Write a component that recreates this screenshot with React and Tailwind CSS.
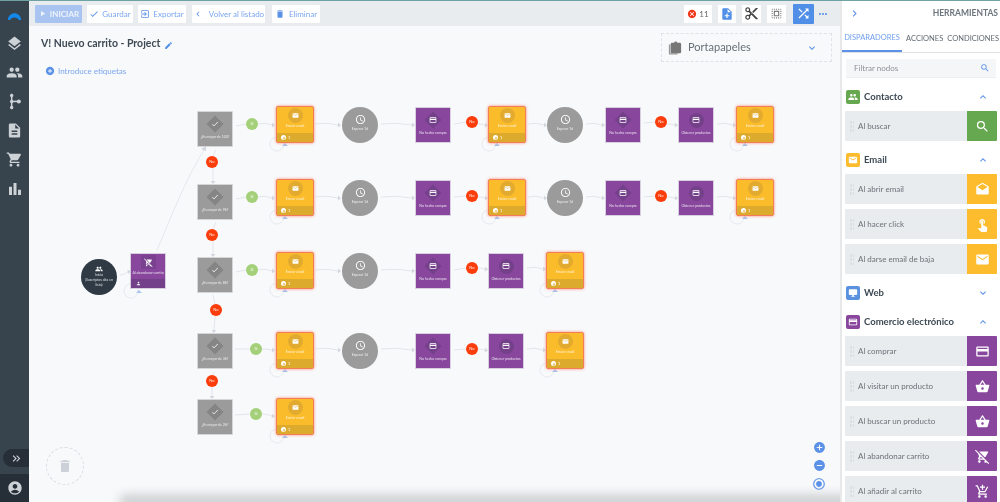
import {
  MdAccessTime, MdAccountCircle, MdAddCircle, MdAddShoppingCart, MdBarChart, MdCancel, MdCheck, MdChevronLeft,
  MdChevronRight, MdContentCut, MdCreditCard, MdDelete, MdDescription, MdDesktopWindows, MdDrafts, MdEdit,
  MdExitToApp, MdExpandLess, MdExpandMore, MdSelectAll, MdLayers, MdMail, MdMoreHoriz, MdNoteAdd, MdPeople,
  MdPlayArrow, MdRadioButtonChecked, MdRemoveCircle, MdRemoveShoppingCart, MdSearch, MdShoppingBasket,
  MdShoppingCart, MdShuffle, MdTouchApp, MdOutlineKeyboardDoubleArrowRight, MdPerson,
} from "react-icons/md";

const font = { fontFamily: 'Lato, "Open Sans", sans-serif' };

// page coordinates, the canvas starts at 29,26
const at = (x, y) => ({ left: x - 29, top: y - 26 });

const conditions = [
  [197, 111, "¿Es mayor de 100?"],
  [197, 184, "¿Es mayor de 96?"],
  [197, 257, "¿Es mayor de 86?"],
  [197, 333, "¿Es mayor de 36?"],
  [197, 399, "¿Es mayor de 26?"],
];
const emails = [
  [276, 106], [276, 179], [276, 252], [276, 332], [276, 398],
  [488, 106], [488, 179], [546, 252], [546, 332], [736, 106], [736, 179],
];
const clocks = [[342, 107], [342, 180], [342, 253], [342, 333], [547, 107], [547, 180]];
const purples = [
  [415, 107, "No hecho compra", true], [415, 180, "No hecho compra", true], [415, 253, "No hecho compra", true], [415, 333, "No hecho compra", true],
  [605, 107, "No hecho compra", true], [605, 180, "No hecho compra", true],
  [678, 107, "Obtener productos"], [678, 180, "Obtener productos"], [488, 253, "Obtener productos"], [488, 333, "Obtener productos"],
];
const yes = [[252, 124], [252, 197], [252, 270], [256, 349], [256, 414]];
const no = [
  [212, 162], [212, 235], [216, 310], [212, 381],
  [472, 122], [472, 196], [472, 268], [472, 349], [661, 122], [661, 196],
];

// [x1, y1, x2, y2]: straight connector ending in an arrow head
const rowLinks = (y, xs) => xs.map(([a, b]) => [a, y, b, y + 1]);
const links = [
  ...[124, 197, 270].flatMap((y) => rowLinks(y, [[258, 272], [315, 338], [381, 412]])),
  ...rowLinks(349, [[262, 272], [315, 338], [381, 412]]),
  [262, 414, 272, 416],
  ...[124, 197].flatMap((y) => rowLinks(y, [[478, 485], [528, 544], [586, 602], [667, 675], [717, 733]])),
  ...rowLinks(268, [[478, 485], [527, 543]]),
  ...rowLinks(349, [[478, 485], [527, 543]]),
  [213, 168, 213, 181], [213, 241, 213, 254], [216, 316, 214, 330], [212, 387, 212, 396],
  [120, 275, 128, 272],
];
const stubs = [
  [236, 126, 246, 124], [236, 199, 246, 197], [236, 272, 246, 270], [235, 349, 250, 349], [235, 415, 250, 414],
  [216, 150, 213, 156], [216, 222, 213, 229], [213, 295, 215, 304], [215, 372, 212, 375],
  [454, 124, 466, 122], [454, 197, 466, 196], [454, 270, 466, 268], [454, 350, 466, 349],
  [644, 123, 655, 122], [644, 197, 655, 196],
];

const sections = [
  { name: "Contacto", color: "bg-[#66a84f]", head: MdPeople, open: true, items: [["Al buscar", MdSearch]] },
  {
    name: "Email", color: "bg-[#fcbc2e]", head: MdMail, open: true,
    items: [["Al abrir email", MdDrafts], ["Al hacer click", MdTouchApp], ["Al darse email de baja", MdMail]],
  },
  { name: "Web", color: "bg-[#5b92e0]", head: MdDesktopWindows, items: [] },
  {
    name: "Comercio electrónico", color: "bg-[#88479d]", head: MdCreditCard, open: true,
    items: [
      ["Al comprar", MdCreditCard], ["Al visitar un producto", MdShoppingBasket], ["Al buscar un producto", MdShoppingBasket],
      ["Al abandonar carrito", MdRemoveShoppingCart], ["Al añadir al carrito", MdAddShoppingCart],
    ],
  },
];

function TreeIcon({ className }) {
  return (
    <svg viewBox="0 0 16 20" className={className} fill="currentColor">
      <rect x="3.2" y="1" width="1.8" height="18" />
      <rect x="4" y="9" width="8" height="1.8" />
      <circle cx="4.1" cy="3" r="2" />
      <circle cx="4.1" cy="10" r="2" />
      <circle cx="4.1" cy="17" r="2" />
      <circle cx="12.5" cy="10" r="2.4" />
    </svg>
  );
}

function ClipboardsIcon({ className }) {
  return (
    <svg viewBox="0 0 16 16" className={className} fill="currentColor">
      <path d="M1 4h1.5v10H11v1.5H2.2C1.5 15.5 1 15 1 14.3z" opacity="0.75" />
      <path d="M4.5 2H7c.2-.9 1-1.5 1.8-1.5S10.4 1.100 10.600 2h2.900C14.300 2 15 2.700 15 3.500v9c0 .8-.7 1.500-1.500 1.500h-9C3.700 14 3 13.300 3 12.500v-9C3 2.700 3.700 2 4.500 2z" />
    </svg>
  );
}

function Sidebar() {
  return (
    <div className="relative flex w-[29px] shrink-0 flex-col items-center bg-[#37434d] text-[#cdd2d7]">
      <svg viewBox="0 0 18 10" className="mt-[11px] h-[9px] w-[17px]">
        <path d="M1.5 9 C2.5 -1 15.500 -1 16.500 9 L14 9 C12 5 6 5 4 9 Z" fill="#1487e8" />
      </svg>
      <div className="mt-[14px] flex flex-col items-center gap-[12px]">
        <MdLayers className="h-[17px] w-[17px]" />
        <MdPeople className="h-[17px] w-[17px]" />
        <TreeIcon className="h-[17px] w-[14px]" />
        <MdDescription className="h-[17px] w-[17px]" />
        <MdShoppingCart className="h-[17px] w-[17px]" />
        <MdBarChart className="h-[18px] w-[18px]" />
      </div>
      <div className="mt-auto flex h-[18px] w-[26px] items-center justify-center self-end rounded-l-full bg-[#262f38]">
        <MdOutlineKeyboardDoubleArrowRight className="h-[13px] w-[13px]" />
      </div>
      <div className="mt-[7px] flex h-[28px] w-full items-center justify-center bg-[#262e37]">
        <MdAccountCircle className="h-[16px] w-[16px]" />
      </div>
    </div>
  );
}

function ToolButton({ icon: Icon, label, className = "" }) {
  return (
    <button className={`flex h-[18px] items-center justify-center whitespace-nowrap rounded-[1px] bg-white text-[8px] text-[#7ba6ee] ${className}`}>
      <Icon className="h-[10px] w-[10px] text-[#5b92e8]" />
      {label}
    </button>
  );
}

function Toolbar() {
  return (
    <div className="flex h-[25px] shrink-0 items-center bg-[#e9ecef] pl-[6px]">
      <button className="flex h-[18px] w-[47px] items-center justify-center gap-[3px] rounded-[1px] bg-[#a9c4f0] text-[8px] font-bold text-[#eef3fc]">
        <MdPlayArrow className="h-[9px] w-[9px]" />
        INICIAR
      </button>
      <ToolButton icon={MdCheck} label="Guardar" className="ml-[5px] w-[46px] gap-[3px]" />
      <ToolButton icon={MdExitToApp} label="Exportar" className="ml-[5px] w-[48px] gap-[3px]" />
      <ToolButton icon={MdChevronLeft} label="Volver al listado" className="ml-[6px] w-[73px] gap-[6px]" />
      <ToolButton icon={MdDelete} label="Eliminar" className="ml-[7px] w-[48px] gap-[4px]" />
      <div className="ml-auto flex items-center">
        <div className="flex h-[18px] w-[28px] items-center justify-center gap-[2px] bg-white text-[8px] text-[#666]">
          <MdCancel className="h-[10px] w-[10px] text-[#f0391c]" />
          11
        </div>
        <div className="ml-[6px] flex h-[18px] w-[18px] items-center justify-center bg-white">
          <MdNoteAdd className="h-[14px] w-[14px] text-[#4f8fe8]" />
        </div>
        <div className="ml-[6px] flex h-[18px] w-[19px] items-center justify-center bg-white">
          <MdContentCut className="h-[15px] w-[15px] text-[#444]" />
        </div>
        <div className="ml-[6px] flex h-[18px] w-[19px] items-center justify-center bg-white">
          <MdSelectAll className="h-[13px] w-[13px] text-[#777]" />
        </div>
        <div className="ml-[7px] flex h-[20px] w-[21px] items-center justify-center rounded-[1px] bg-[#4f8fe8]">
          <MdShuffle className="h-[15px] w-[15px] text-white" />
        </div>
        <MdMoreHoriz className="ml-[3px] mr-[11px] h-[12px] w-[12px] text-[#5b92e8]" />
      </div>
    </div>
  );
}

function NodeLabel({ children, className = "" }) {
  return <div className={`text-center text-[3.5px] leading-[5px] text-white/80 ${className}`}>{children}</div>;
}

function Diamond({ className, children }) {
  return (
    <div className="flex h-[22px] items-center justify-center">
      <div className={`flex h-[12px] w-[12px] rotate-45 items-center justify-center ${className}`}>
        <div className="-rotate-45">{children}</div>
      </div>
    </div>
  );
}

function ConditionNode({ x, y, label }) {
  return (
    <div style={at(x, y)} className="absolute h-[36px] w-[36px] rounded-[1px] border border-[#d4d6d8] bg-[#9b9b9b] pt-px">
      <Diamond className="bg-[#858585]">
        <MdCheck className="h-[8px] w-[8px] text-white" />
      </Diamond>
      <NodeLabel className="whitespace-nowrap">{label}</NodeLabel>
    </div>
  );
}

function EmailNode({ x, y }) {
  return (
    <div style={at(x, y)} className="absolute flex h-[37px] w-[38px] flex-col overflow-hidden rounded-[2px] border-[1.5px] border-[#f47c5a] bg-[#fbbc2c] shadow-[0_0_3px_#f88a70]">
      <div className="mx-auto mt-[1px] flex h-[15px] w-[15px] items-center justify-center rounded-full bg-[#e2aa2e]">
        <MdMail className="h-[7px] w-[7px] text-white" />
      </div>
      <NodeLabel className="mt-[1px]">Enviar email</NodeLabel>
      <div className="mt-auto flex h-[9px] items-center gap-[2px] bg-[#dcaa2c] pl-[4px] text-[4px] text-white">
        <span className="flex h-[5px] w-[5px] items-center justify-center rounded-full bg-white">
          <MdPerson className="h-[4px] w-[4px] text-[#dcaa2c]" />
        </span>
        1
      </div>
    </div>
  );
}

function ClockNode({ x, y }) {
  return (
    <div style={at(x, y)} className="absolute flex h-[36px] w-[36px] flex-col items-center rounded-full bg-[#9b9b9b] pt-[7px]">
      <MdAccessTime className="h-[11px] w-[11px] text-white" />
      <NodeLabel className="mt-[2px]">Esperar 1d</NodeLabel>
    </div>
  );
}

function PurpleNode({ x, y, label, diamond }) {
  return (
    <div style={at(x, y)} className="absolute h-[36px] w-[36px] rounded-[1px] border border-[#d8cfe0] bg-[#88479d] pt-px">
      {diamond ? (
        <Diamond className="bg-[#74408a]">
          <MdCreditCard className="h-[8px] w-[8px] text-white" />
        </Diamond>
      ) : (
        <div className="flex h-[22px] items-center justify-center">
          <div className="flex h-[15px] w-[15px] items-center justify-center rounded-full bg-[#74408a]">
            <MdCreditCard className="h-[8px] w-[8px] text-white" />
          </div>
        </div>
      )}
      <NodeLabel className="whitespace-nowrap">{label}</NodeLabel>
    </div>
  );
}

function TriggerNode() {
  return (
    <div style={at(130, 253)} className="absolute flex h-[36px] w-[36px] flex-col items-center rounded-[1px] border border-[#d8cfe0] bg-[#88479d]">
      <div className="mt-[1px] flex h-[14px] w-[15px] items-center justify-center bg-[#7a4190]">
        <MdRemoveShoppingCart className="h-[9px] w-[9px] text-white" />
      </div>
      <NodeLabel className="mt-[2px] whitespace-nowrap">Al abandonar carrito</NodeLabel>
      <div className="mt-auto flex h-[9px] w-full items-center bg-[#74408a] pl-[5px]">
        <MdPerson className="h-[5px] w-[5px] text-white" />
      </div>
    </div>
  );
}

function Bubble({ x, y, label, className }) {
  return (
    <div style={at(x - 6, y - 6)} className={`absolute flex h-[12px] w-[12px] items-center justify-center rounded-full text-[4px] text-white/90 ${className}`}>
      {label}
    </div>
  );
}

function Connectors() {
  const loops = [...emails, [130, 253]];
  return (
    <svg viewBox="29 26 811 476" className="absolute inset-0 h-[476px] w-[811px]" fill="none">
      {stubs.map(([a, b, c, d], i) => (
        <line key={i} x1={a} y1={b} x2={c} y2={d} stroke="#dfe3e9" strokeWidth="0.9" />
      ))}
      {links.map(([a, b, c, d], i) => {
        const dx = c - a;
        const dy = d - b;
        const len = Math.hypot(dx, dy);
        const ux = dx / len;
        const uy = dy / len;
        return (
          <g key={i}>
            <path d={`M${a} ${b} Q${(a + c) / 2} ${b - (len > 14 ? 2 : 0)} ${c} ${d}`} stroke="#dfe3e9" strokeWidth="0.9" />
            <polygon
              points={`${c + ux * 3} ${d + uy * 3} ${c - uy * 2.5} ${d + ux * 2.5} ${c + uy * 2.5} ${d - ux * 2.5}`}
              fill="#d3d8e0"
            />
          </g>
        );
      })}
      <path d="M157 250 C170 220 185 180 204 150" stroke="#e2e5ea" strokeWidth="0.9" />
      <polygon points="206,146 201,149 206,151" fill="#d3d8e0" />
      {loops.map(([x, y], i) => (
        <g key={i}>
          <circle cx={x + 1} cy={y + 38} r="7" stroke="#e4e7ec" strokeWidth="0.9" />
          <polygon points={`${x + 6},${y + 40} ${x + 9},${y + 37} ${x + 12},${y + 40}`} fill="#a9c4f0" />
        </g>
      ))}
    </svg>
  );
}

function Canvas() {
  return (
    <div className="relative min-h-0 flex-1 overflow-hidden bg-[#f8f9fb]">
      <Connectors />
      <div className="relative flex items-center gap-[4px] pl-[12px] pt-[9px] text-[10.500px] font-bold leading-[17px] text-[#3e4a54]">
        V! Nuevo carrito - Project
        <MdEdit className="mt-[3px] h-[9px] w-[9px] text-[#4f8fe8]" />
      </div>
      <div className="relative mt-[13px] flex items-center gap-[3px] pl-[16px] text-[8px] leading-[12px] text-[#7ba6ee]">
        <MdAddCircle className="h-[10px] w-[10px] text-[#5b92e8]" />
        Introduce etiquetas
      </div>

      <div className="absolute right-[8px] top-[7px] flex h-[29px] w-[171px] items-center border border-dashed border-[#dfe2e6] pl-[6px] pr-[13px] text-[11px] text-[#666f78]">
        <ClipboardsIcon className="h-[14px] w-[14px] text-[#777]" />
        <span className="ml-[6px]">Portapapeles</span>
        <MdExpandMore className="ml-auto h-[12px] w-[12px] text-[#5b92e8]" />
      </div>

      <div style={at(81, 259)} className="absolute flex h-[36px] w-[36px] flex-col items-center rounded-full bg-[#2f3a44] pt-[6px]">
        <MdPeople className="h-[8px] w-[8px] text-white" />
        <NodeLabel className="leading-[4.500px]">Inicio<br />(Suscriptos alta en<br />lista)</NodeLabel>
      </div>
      <TriggerNode />
      {conditions.map(([x, y, label]) => <ConditionNode key={y} x={x} y={y} label={label} />)}
      {emails.map(([x, y]) => <EmailNode key={`${x}-${y}`} x={x} y={y} />)}
      {clocks.map(([x, y]) => <ClockNode key={`${x}-${y}`} x={x} y={y} />)}
      {purples.map(([x, y, label, diamond]) => <PurpleNode key={`${x}-${y}`} x={x} y={y} label={label} diamond={diamond} />)}
      {yes.map(([x, y]) => <Bubble key={y} x={x} y={y} label="Si" className="bg-[#a4d07a]" />)}
      {no.map(([x, y]) => <Bubble key={`${x}-${y}`} x={x} y={y} label="No" className="bg-[#fb3d0b]" />)}

      <div className="absolute bottom-[17px] left-[17px] flex h-[38px] w-[38px] items-center justify-center rounded-full border border-dashed border-[#d9dce0]">
        <MdDelete className="h-[16px] w-[16px] text-[#ccd1d8]" />
      </div>
      <div className="absolute bottom-[11px] right-[14px] flex flex-col items-center gap-[5px] text-[#5b92e8]">
        <MdAddCircle className="h-[13px] w-[13px]" />
        <MdRemoveCircle className="h-[13px] w-[13px]" />
        <MdRadioButtonChecked className="h-[14px] w-[14px]" />
      </div>
      <div className="absolute -bottom-[6px] left-[90px] -right-[20px] h-[14px] rounded-l-full bg-[#cfd1d3] blur-[5px]" />
    </div>
  );
}

function PanelItem({ label, icon: Icon, color }) {
  return (
    <div className="flex h-[30px] items-center overflow-hidden rounded-[1px] bg-[#e9ecef]">
      <div className="ml-[5px] grid h-[11px] w-[4px] grid-cols-2 gap-[1px] opacity-70">
        {[0, 1, 2, 3, 4, 5].map((i) => <span key={i} className="bg-[#d8dbdf]" />)}
      </div>
      <span className="ml-[4px] flex-1 truncate text-[8px] text-[#6a7178]">{label}</span>
      <div className={`flex h-full w-[30px] items-center justify-center ${color}`}>
        <Icon className="h-[15px] w-[15px] text-white" />
      </div>
    </div>
  );
}

function Panel() {
  return (
    <div className="flex w-[160px] shrink-0 flex-col overflow-hidden border-l-2 border-[#e6e8ea] bg-white">
      <div className="flex h-[25px] shrink-0 items-center justify-between pl-[6px] pr-[2px]">
        <MdChevronRight className="h-[13px] w-[13px] text-[#5b92e8]" />
        <span className="text-[8.500px] font-bold text-[#6c757d]">HERRAMIENTAS</span>
      </div>
      <div className="flex h-[27px] shrink-0 items-center justify-between whitespace-nowrap border-b border-[#dfe2e5] pr-px text-[7.500px] text-[#5f6870]">
        <span className="flex h-full w-[60px] items-center justify-center border-b-2 border-[#5b92e8] text-[#6f9fec]">DISPARADORES</span>
        <span>ACCIONES</span>
        <span>CONDICIONES</span>
      </div>
      <div className="mx-[4px] mt-[6px] flex h-[19px] shrink-0 items-center justify-between border-b border-[#eceef0] bg-[#f5f6f7] pl-[8px] pr-[6px] text-[8px] text-[#8b9299]">
        Filtrar nodos
        <MdSearch className="h-[10px] w-[10px] text-[#5b92e8]" />
      </div>
      <div className="mt-[12px] flex flex-col px-[3px]">
        {sections.map((s) => (
          <div key={s.name} className={s.open ? "mb-[12px]" : "mb-[15px]"}>
            <div className="flex h-[14px] items-center pl-[1px] pr-[8px]">
              <div className={`flex h-[14px] w-[14px] items-center justify-center rounded-[2px] ${s.color}`}>
                <s.head className="h-[10px] w-[10px] text-white" />
              </div>
              <span className="ml-[4px] text-[9.500px] font-bold text-[#3e4a54]">{s.name}</span>
              {s.open
                ? <MdExpandLess className="ml-auto h-[12px] w-[12px] text-[#5b92e8]" />
                : <MdExpandMore className="ml-auto h-[12px] w-[12px] text-[#5b92e8]" />}
            </div>
            {s.items.length > 0 && (
              <div className="mt-[7px] flex flex-col gap-[5px]">
                {s.items.map(([label, icon]) => <PanelItem key={label} label={label} icon={icon} color={s.color} />)}
              </div>
            )}
          </div>
        ))}
      </div>
    </div>
  );
}

export default function App() {
  return (
    <div style={font} className="flex h-screen w-full flex-col overflow-hidden bg-white blur-[0.4px]">
      <div className="h-px shrink-0 bg-[#6fa3a3]" />
      <div className="flex min-h-0 flex-1">
        <Sidebar />
        <div className="flex min-w-0 flex-1 flex-col">
          <Toolbar />
          <Canvas />
        </div>
        <Panel />
      </div>
    </div>
  );
}
